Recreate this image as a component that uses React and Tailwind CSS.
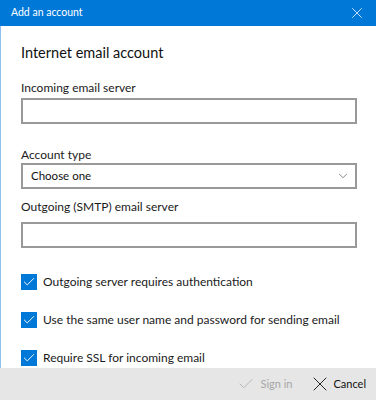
import { Check, X, ChevronDown } from 'lucide-react'

const font = { fontFamily: 'Lato, "Noto Sans", sans-serif' }

function Field({ label, children, className = '' }) {
  return (
    <div className={className}>
      <div className="text-[12px] leading-[16px] text-[#1a1a1a]">{label}</div>
      {children}
    </div>
  )
}

function Checkbox({ label }) {
  return (
    <div className="flex items-center gap-[6px] h-[17px]">
      <span className="w-[16px] h-[16px] bg-[#0078d7] flex items-center justify-center shrink-0">
        <Check size={14} strokeWidth={1.6} className="text-white" />
      </span>
      <span className="text-[12px] leading-[17px] text-[#1a1a1a] whitespace-nowrap">{label}</span>
    </div>
  )
}

export default function App() {
  return (
    <div className="w-[376px] h-[400px] bg-white flex flex-col overflow-hidden" style={font}>
      {/* Title bar */}
      <div className="h-[26px] bg-[#0078d7] flex items-center justify-between pl-[11px] pr-[10px] shrink-0">
        <span className="text-white text-[10.5px]">Add an account</span>
        <X size={18} strokeWidth={1} className="text-white" />
      </div>

      <div className="flex-1 min-h-0 border-l border-[#8cc0ee] pl-[20px] pr-[19px] pt-[14px]">
        <h1 className="text-[14.5px] leading-[26px] text-[#111]">Internet email account</h1>

        <Field label="Incoming email server" className="mt-[14px]">
          <div className="mt-[2px] h-[26px] border-2 border-[#999] bg-white" />
        </Field>

        <Field label="Account type" className="mt-[23px]">
          <div className="h-[26px] border-2 border-[#999] bg-white flex items-center justify-between pl-[8px] pr-[5px]">
            <span className="text-[11.5px] text-[#111]">Choose one</span>
            <ChevronDown size={14} strokeWidth={1.2} className="text-[#555]" />
          </div>
        </Field>

        <Field label="Outgoing (SMTP) email server" className="mt-[10px]">
          <div className="mt-[7px] h-[26px] border-2 border-[#999] bg-white" />
        </Field>

        <div className="mt-[25px] flex flex-col gap-[21px]">
          <Checkbox label="Outgoing server requires authentication" />
          <Checkbox label="Use the same user name and password for sending email" />
          <Checkbox label="Require SSL for incoming email" />
        </div>
      </div>

      {/* Footer */}
      <div className="h-[32px] bg-[#e6e6e6] flex items-center justify-end pr-[10px] gap-[16px] shrink-0">
        <div className="flex items-center gap-[5px] text-[#a6a6a6]">
          <Check size={18} strokeWidth={1} />
          <span className="text-[11px]">Sign in</span>
        </div>
        <div className="flex items-center gap-[1px] text-[#111]">
          <X size={24} strokeWidth={0.9} />
          <span className="text-[11px]">Cancel</span>
        </div>
      </div>
    </div>
  )
}
